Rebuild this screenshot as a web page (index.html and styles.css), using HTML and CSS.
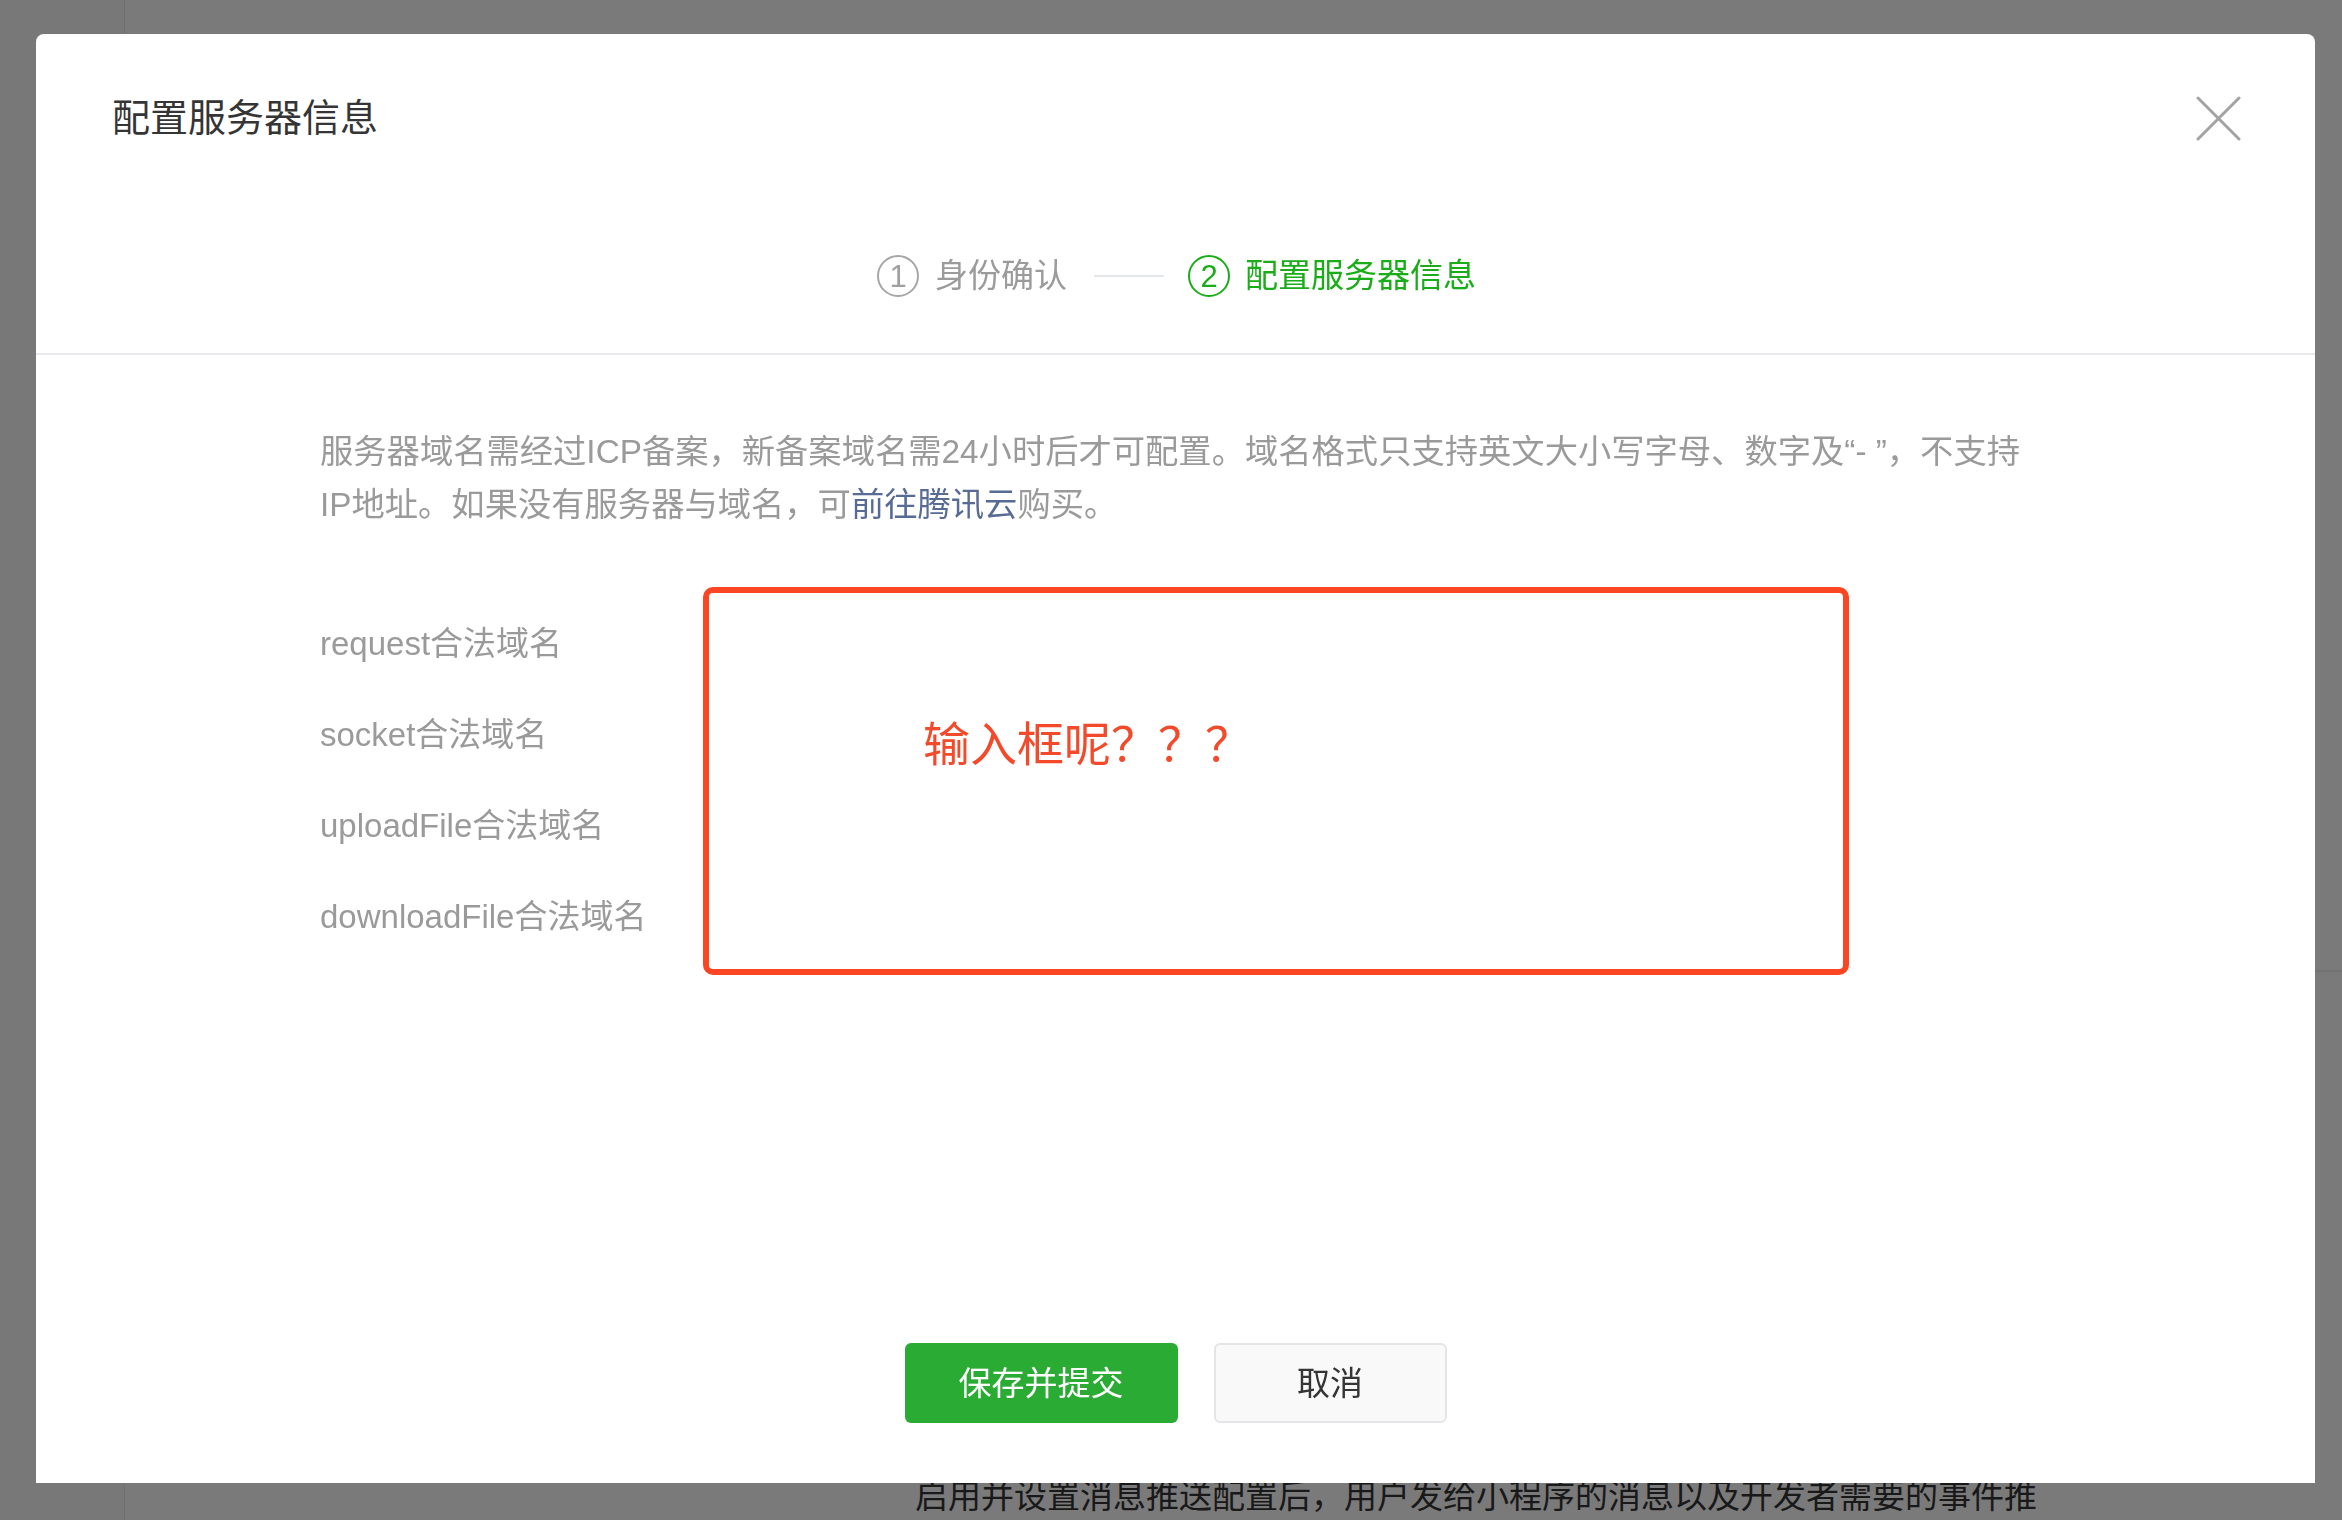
FILE: index.html
```html
<!DOCTYPE html>
<html lang="zh-CN">
    <head>
        <meta charset="utf-8">
        <title>配置服务器信息</title>
        <meta name="viewport" content="width=device-width">

        <link rel="stylesheet" href="styles.css">
    </head>
	<body>
		<!-- page behind the dialog -->
		<div class="page">
			<aside class="page-side"></aside>
			<main class="page-main">
				<div class="page-panel"></div>
				<p class="page-tips">启用并设置消息推送配置后，用户发给小程序的消息以及开发者需要的事件推送将被推送至开发者填写的服务器地址</p>
			</main>
		</div>

		<div class="mask"></div>

		<div class="dialog" role="dialog">
			<div class="dialog-hd">
				<div class="dialog-title-row">
					<h3 class="dialog-title">配置服务器信息</h3>
					<a class="dialog-close" href="javascript:;" title="关闭">
						<svg width="45" height="45" viewBox="0 0 45 45">
							<path d="M2 2 L43 43 M43 2 L2 43" stroke="#a3a3a3" stroke-width="3" stroke-linecap="round" fill="none"/>
						</svg>
					</a>
				</div>
				<ol class="steps">
					<li class="step">
						<span class="step-num">1</span>
						<span class="step-text">身份确认</span>
					</li>
					<li class="step-line"></li>
					<li class="step current">
						<span class="step-num">2</span>
						<span class="step-text">配置服务器信息</span>
					</li>
				</ol>
			</div>

			<div class="dialog-bd">
				<p class="desc">服务器域名需经过ICP备案，新备案域名需24小时后才可配置。域名格式只支持英文大小写字母、数字及“- ”，不支持<br>IP地址。如果没有服务器与域名，可<a class="link" href="javascript:;">前往腾讯云</a>购买。</p>

				<div class="form">
					<div class="form-labels">
						<label class="form-label">request合法域名</label>
						<label class="form-label">socket合法域名</label>
						<label class="form-label">uploadFile合法域名</label>
						<label class="form-label">downloadFile合法域名</label>
					</div>
					<div class="mark-box">
						<span class="mark-text">输入框呢？？？</span>
					</div>
				</div>
			</div>

			<div class="dialog-ft">
				<button type="button" class="btn btn-primary">保存并提交</button>
				<button type="button" class="btn btn-default">取消</button>
			</div>
		</div>
	</body>
</html>
```

FILE: styles.css
```css
html, body {
    margin: 0;
    height: 100%;
    overflow: hidden;
}

body {
    color: #353535;
    font-family: "Liberation Sans", "Noto Sans CJK SC", sans-serif;
    font-size: 33px;
    background-color: #fff;
}

/* page under the mask */
.page {
    display: flex;
    min-height: 100vh;
}
.page-side {
    width: 124px;
    border-right: 1px solid #ececec;
    background-color: #fbfbfb;
}
.page-main {
    flex: 1;
}
.page-panel {
    height: 970px;
    border-bottom: 2px solid #eeeeee;
}
.page-tips {
    width: 1130px;
    margin: 0;
    padding: 500px 0 0 790px;
    line-height: 50px;
    color: #353535;
}

.mask {
    position: fixed;
    top: 0;
    left: 0;
    right: 0;
    bottom: 0;
    background-color: rgba(0, 0, 0, 0.52);
}

/* dialog */
.dialog {
    position: fixed;
    top: 34px;
    left: 36px;
    width: 2279px;
    height: 1449px;
    display: flex;
    flex-direction: column;
    background-color: #fff;
    border-radius: 8px 8px 0 0;
}

.dialog-hd {
    padding: 57px 74px 50px 76px;
    border-bottom: 2px solid #e7e9ec;
}
.dialog-title-row {
    display: flex;
    justify-content: space-between;
    align-items: center;
    height: 54px;
}
.dialog-title {
    margin: 0;
    font-size: 38px;
    font-weight: 400;
    line-height: 54px;
    color: #353535;
}
.dialog-close {
    display: block;
    width: 45px;
    height: 45px;
}
.dialog-close svg {
    display: block;
}

.steps {
    display: flex;
    justify-content: center;
    align-items: center;
    height: 54px;
    margin: 104px 0 0;
    padding: 0;
    list-style: none;
}
.step {
    display: flex;
    align-items: center;
    color: #9b9b9b;
}
.step-num {
    width: 38px;
    height: 38px;
    border: 2px solid #a6a6a6;
    border-radius: 50%;
    display: flex;
    align-items: center;
    justify-content: center;
    font-size: 31px;
    line-height: 1;
    color: #a0a0a0;
}
.step-text {
    margin-left: 16px;
    font-size: 33px;
    line-height: 54px;
}
.step-line {
    width: 70px;
    height: 2px;
    margin: 0 24px 0 27px;
    background-color: #e4e8eb;
}
.step.current {
    color: #1aad19;
}
.step.current .step-num {
    border-color: #1aad19;
    color: #1aad19;
}
.step.current .step-text {
    margin-left: 15px;
}

.dialog-bd {
    flex: 1;
    padding: 70px 0 0 284px;
}
.desc {
    margin: 0;
    font-size: 33.3px;
    line-height: 53px;
    color: #9a9a9a;
    white-space: nowrap;
}
.link {
    color: #576b95;
    text-decoration: none;
}

.form {
    display: flex;
    margin-top: 56px;
}
.form-labels {
    width: 383px;
    padding-top: 11px;
}
.form-label {
    display: block;
    font-size: 33px;
    line-height: 91px;
    color: #9a9a9a;
}
.mark-box {
    box-sizing: border-box;
    width: 1146px;
    height: 388px;
    padding: 122px 0 0 214px;
    border: 6px solid #fc4623;
    border-radius: 10px;
}
.mark-text {
    font-size: 47px;
    line-height: 60px;
    color: #f24a2b;
}

.dialog-ft {
    display: flex;
    justify-content: center;
    gap: 36px;
    padding-bottom: 60px;
}
.btn {
    box-sizing: border-box;
    height: 80px;
    padding: 0 0 4px;
    border-radius: 6px;
    font-family: inherit;
    font-size: 33px;
    cursor: pointer;
}
.btn-primary {
    width: 273px;
    border: 0;
    background-color: #2aac34;
    color: #fff;
}
.btn-default {
    width: 233px;
    border: 2px solid #e3e5e8;
    background-color: #f9f9f9;
    color: #353535;
}
```
